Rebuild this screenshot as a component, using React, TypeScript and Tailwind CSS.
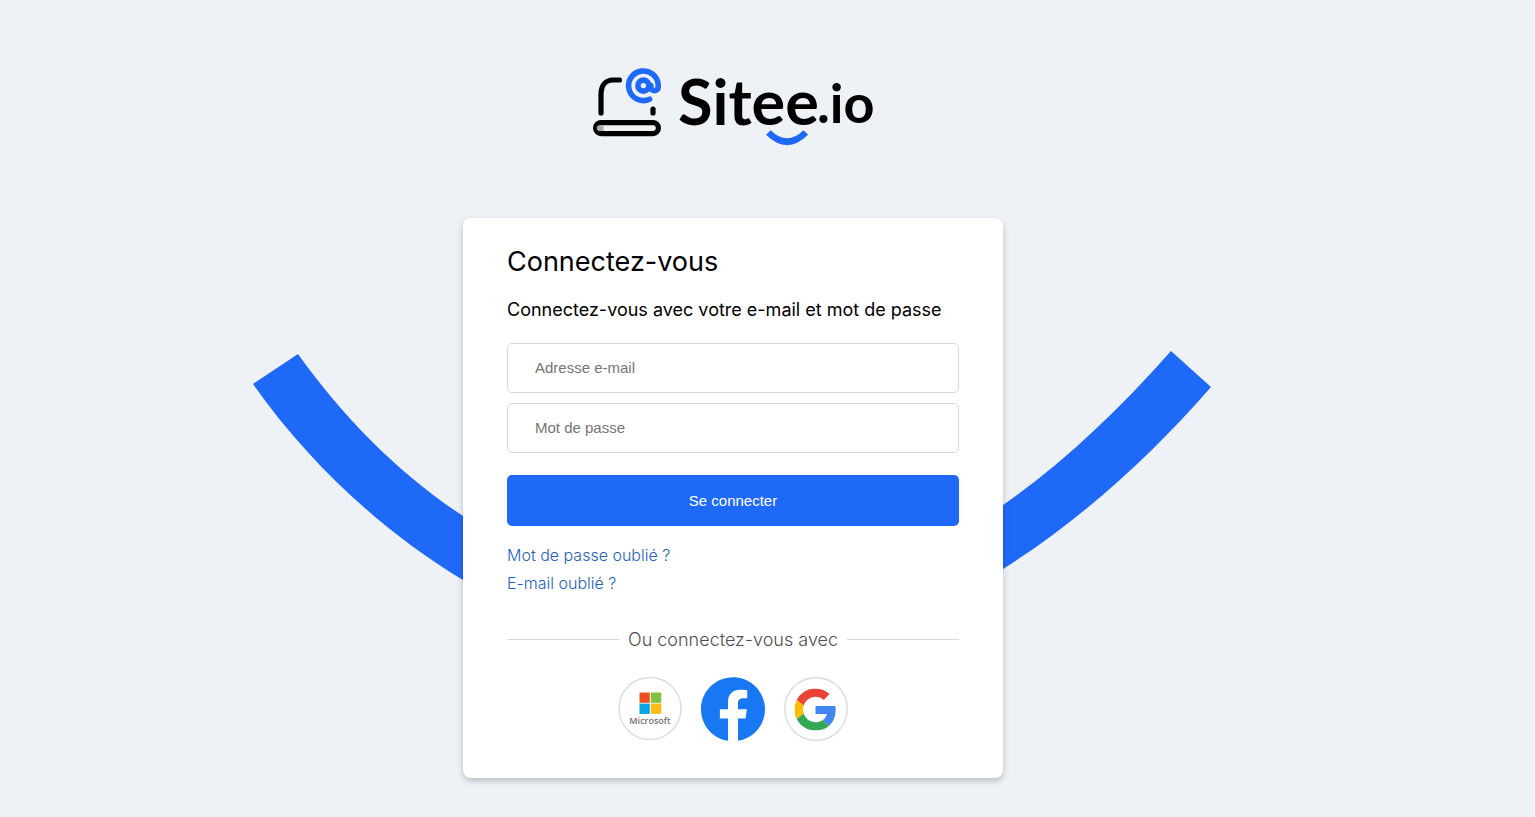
import type { ReactNode } from "react";

function Logo() {
  return (
    <svg
      viewBox="590 56 286 96"
      className="h-[96px] w-[286px] max-w-full"
      role="img"
      aria-label="Sitee.io"
    >
      <g fill="none" stroke="#000" strokeWidth="5.2" strokeLinecap="round">
        <path d="M601 113V95c0-10 5-15 12-15h6.5" />
        <path d="M653 109v4" />
        <rect x="595.6" y="122.6" width="62.8" height="11" rx="5.5" fill="#f3f0f8" />
      </g>
      <path d="M603.5 125.3h-4a2.8 2.8 0 0 0 0 5.6h4z" fill="#aaa8ad" />
      <g fill="none" stroke="#1f69f9" strokeWidth="5.6">
        <path
          strokeLinecap="round"
          d="M649.6 99.2A14.8 14.8 0 1 1 658.2 85.6v1.6a3.7 3.4 0 0 1-7.4 0V85.6"
        />
        <circle cx="643.4" cy="85.6" r="5.5" />
        <path d="M768.4 132.5Q787 151 805.8 132.5" strokeWidth="6.6" />
      </g>
      <text x="678" y="124.5" className="font-['Lato',sans-serif] text-[63px] font-bold">
        Sitee
      </text>
      <text x="817" y="122.5" className="font-['Lato',sans-serif] text-[54px] font-bold">
        .io
      </text>
    </svg>
  );
}

function Smile() {
  return (
    <svg
      viewBox="253 351 960 230"
      className="absolute top-[133px] left-1/2 h-[230px] w-[960px] max-w-none -translate-x-1/2"
      aria-hidden="true"
    >
      <path
        fill="#1f69f9"
        d="M298 354C345 420 402 476 463 516C640 625 830 625 1003 505C1062 464 1118 411 1171 351L1211 387C1152 455 1082 519 1003 569C830 690 640 690 463 580C385 533 311 466 253 384Z"
      />
    </svg>
  );
}

function MicrosoftIcon() {
  return (
    <svg viewBox="0 0 64 64" className="size-16" aria-hidden="true">
      <circle cx="32" cy="31.5" r="31" fill="#fff" stroke="#dcdcdc" strokeWidth="1.4" />
      <path fill="#f04e23" d="M21.5 15.5h10.3v10.3H21.5z" />
      <path fill="#7fc241" d="M32.8 15.5h10.4v10.3H32.8z" />
      <path fill="#05a6e3" d="M21.5 26.6h10.3v10.3H21.5z" />
      <path fill="#fbbc16" d="M32.8 26.6h10.4v10.3H32.8z" />
      <text
        x="32"
        y="46.5"
        textAnchor="middle"
        fill="#707070"
        className="font-['Open_Sans',sans-serif] text-[9px] font-semibold"
      >
        Microsoft
      </text>
    </svg>
  );
}

function FacebookIcon() {
  return (
    <svg viewBox="0 0 24 24" className="size-16" aria-hidden="true">
      <path
        fill="#1877f2"
        d="M24 12.073c0-6.627-5.373-12-12-12s-12 5.373-12 12c0 5.99 4.388 10.954 10.125 11.854v-8.385H7.078v-3.47h3.047V9.43c0-3.007 1.792-4.669 4.533-4.669 1.312 0 2.686.235 2.686.235v2.953H15.83c-1.491 0-1.956.925-1.956 1.874v2.25h3.328l-.532 3.47h-2.796v8.385C19.612 23.027 24 18.062 24 12.073z"
      />
    </svg>
  );
}

function GoogleIcon() {
  return (
    <svg viewBox="0 0 64 64" className="size-16" aria-hidden="true">
      <circle cx="32" cy="32" r="31.3" fill="#fff" stroke="#dcdcdc" strokeWidth="1.4" />
      <svg x="10.5" y="11.5" width="42" height="42" viewBox="0 0 48 48">
        <path
          fill="#ea4335"
          d="M24 9.5c3.54 0 6.71 1.22 9.21 3.6l6.85-6.85C35.9 2.38 30.47 0 24 0 14.62 0 6.51 5.38 2.56 13.22l7.98 6.19C12.43 13.72 17.74 9.5 24 9.5z"
        />
        <path
          fill="#4285f4"
          d="M46.98 24.55c0-1.57-.15-3.09-.38-4.55H24v9.02h12.94c-.58 2.96-2.26 5.48-4.78 7.18l7.73 6c4.51-4.18 7.09-10.36 7.09-17.65z"
        />
        <path
          fill="#fbbc05"
          d="M10.53 28.59c-.48-1.45-.76-2.99-.76-4.59s.27-3.14.76-4.59l-7.98-6.19C.92 16.46 0 20.12 0 24c0 3.88.92 7.54 2.56 10.78l7.97-6.19z"
        />
        <path
          fill="#34a853"
          d="M24 48c6.48 0 11.93-2.13 15.89-5.81l-7.73-6c-2.15 1.45-4.92 2.3-8.16 2.3-6.26 0-11.57-4.22-13.47-9.91l-7.98 6.19C6.51 42.62 14.62 48 24 48z"
        />
      </svg>
    </svg>
  );
}

function Field({ id, type, label }: { id: string; type: string; label: string }) {
  return (
    <input
      id={id}
      name={id}
      type={type}
      aria-label={label}
      placeholder={label}
      className="h-[50px] w-full rounded-[5px] border border-[#d8d8d8] bg-white px-[27px] pb-0.5 font-['Liberation_Sans',sans-serif] text-[15px] text-black placeholder:text-[#757575]"
    />
  );
}

function SocialButton({ label, children }: { label: string; children: ReactNode }) {
  return (
    <button type="button" aria-label={label} className="cursor-pointer rounded-full">
      {children}
    </button>
  );
}

export default function App() {
  return (
    <main className="flex min-h-screen flex-col items-center overflow-hidden bg-[#eef2f7] pt-14 pb-8 font-['Inter',sans-serif] lg:pr-[69px]">
      <Logo />
      <div className="relative mt-[66px] flex w-full justify-center">
        <Smile />
        <section className="relative w-full max-w-[540px] rounded-lg bg-white px-11 pt-6 pb-[37px] shadow-[0_3px_6px_rgba(0,0,0,0.22)]">
          <h1 className="text-[27px] leading-10 text-black">Connectez-vous</h1>
          <p className="mt-3.5 text-lg leading-7 text-black">
            Connectez-vous avec votre e-mail et mot de passe
          </p>
          <form className="mt-[19px]" onSubmit={(event) => event.preventDefault()}>
            <div className="flex flex-col gap-2.5">
              <Field id="email" type="email" label="Adresse e-mail" />
              <Field id="password" type="password" label="Mot de passe" />
            </div>
            <button
              type="submit"
              className="mt-[22px] h-[51px] w-full cursor-pointer rounded-[5px] bg-[#1f69f9] pt-0.5 font-['Liberation_Sans',sans-serif] text-[15px] text-white"
            >
              Se connecter
            </button>
          </form>
          <nav className="mt-[15px] flex flex-col items-start text-base leading-7 font-light text-[#2361bd]">
            <a href="#mot-de-passe">Mot de passe oublié ?</a>
            <a href="#email-oublie">E-mail oublié ?</a>
          </nav>
          <div className="mt-[27px] flex items-center gap-[9px]">
            <span className="h-px flex-1 bg-[#d8d8d8]" />
            <span className="pt-0.5 text-lg leading-7 font-light text-[#505050]">
              Ou connectez-vous avec
            </span>
            <span className="h-px flex-1 bg-[#d8d8d8]" />
          </div>
          <div className="mt-[23px] flex justify-center gap-[19px]">
            <SocialButton label="Microsoft">
              <MicrosoftIcon />
            </SocialButton>
            <SocialButton label="Facebook">
              <FacebookIcon />
            </SocialButton>
            <SocialButton label="Google">
              <GoogleIcon />
            </SocialButton>
          </div>
        </section>
      </div>
    </main>
  );
}
